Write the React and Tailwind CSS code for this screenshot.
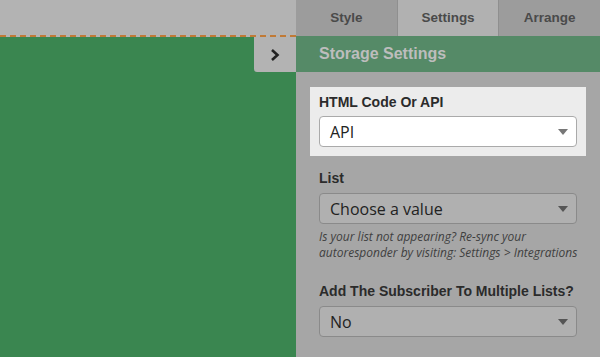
export default function App() {
  const caret = (
    <svg width="10" height="6" viewBox="0 0 10 6" className="shrink-0">
      <path d="M0 0 L10 0 L5 6 Z" fill="currentColor" />
    </svg>
  )

  return (
    <div className="flex h-[357px] w-[600px] overflow-hidden font-['Liberation_Sans',Arial,sans-serif]">
      {/* canvas */}
      <div className="flex w-[296px] shrink-0 flex-col bg-[#3a8650]">
        <div className="h-[37px] shrink-0 border-b-2 border-dashed border-[#c07a36] bg-[#b3b3b3]" />
        <div className="flex justify-end">
          <button className="flex h-[35px] w-[42px] items-center justify-center rounded-bl-[3px] bg-[#b3b3b3] text-[#222]">
            <svg width="10" height="14" viewBox="0 0 10 14">
              <path d="M2 2 L7.5 7 L2 12" fill="none" stroke="currentColor" strokeWidth="2.6" strokeLinejoin="miter" />
            </svg>
          </button>
        </div>
      </div>

      {/* side panel */}
      <div className="flex min-w-0 flex-1 flex-col bg-[#a6a6a6]">
        <div className="flex h-[36px] shrink-0 text-[13.5px] font-bold text-[#4a4a4a]">
          <div className="flex flex-1 items-center justify-center border-r border-[#8f8f8f] bg-[#9c9c9c]">Style</div>
          <div className="flex flex-1 items-center justify-center border-r border-[#8f8f8f] bg-[#b1b1b1]">Settings</div>
          <div className="flex flex-1 items-center justify-center bg-[#9c9c9c]">Arrange</div>
        </div>
        <div className="flex h-[36px] shrink-0 items-center bg-[#558a67] pl-[23px] text-[16px] font-bold text-[#bdbdbd]">
          Storage Settings
        </div>

        <div className="flex flex-col px-[14px] pt-[15px]">
          <div className="bg-[#ececec] px-[9px] pb-[9px] pt-[7px]">
            <div className="text-[14px] font-bold leading-[17px] text-[#2b2b2b]">HTML Code Or API</div>
            <div className="mt-[5px] flex h-[31px] items-center justify-between rounded-[4px] border border-[#aaa] bg-white pl-[10px] pr-[8px] font-['Open_Sans',sans-serif] text-[16px] text-[#222]">
              <span>API</span>
              <span className="text-[#777]">{caret}</span>
            </div>
          </div>

          <div className="px-[9px] pt-[14px]">
            <div className="text-[14px] font-bold leading-[17px] text-[#2b2b2b]">List</div>
            <div className="mt-[6px] flex h-[31px] items-center justify-between rounded-[4px] border border-[#8a8a8a] bg-[#b0b0b0] pl-[10px] pr-[8px] font-['Open_Sans',sans-serif] text-[16px] text-[#222]">
              <span>Choose a value</span>
              <span className="text-[#555]">{caret}</span>
            </div>
            <p className="mt-[5px] whitespace-nowrap font-['Open_Sans',sans-serif] text-[12px] italic leading-[16px] text-[#3f3f3f]">
              Is your list not appearing? Re-sync your<br />autoresponder by visiting: Settings &gt; Integrations
            </p>

            <div className="mt-[22px] text-[14px] font-bold leading-[17px] text-[#2b2b2b]">Add The Subscriber To Multiple Lists?</div>
            <div className="mt-[6px] flex h-[31px] items-center justify-between rounded-[4px] border border-[#8a8a8a] bg-[#b0b0b0] pl-[10px] pr-[8px] font-['Open_Sans',sans-serif] text-[16px] text-[#222]">
              <span>No</span>
              <span className="text-[#555]">{caret}</span>
            </div>
          </div>
        </div>
      </div>
    </div>
  )
}
